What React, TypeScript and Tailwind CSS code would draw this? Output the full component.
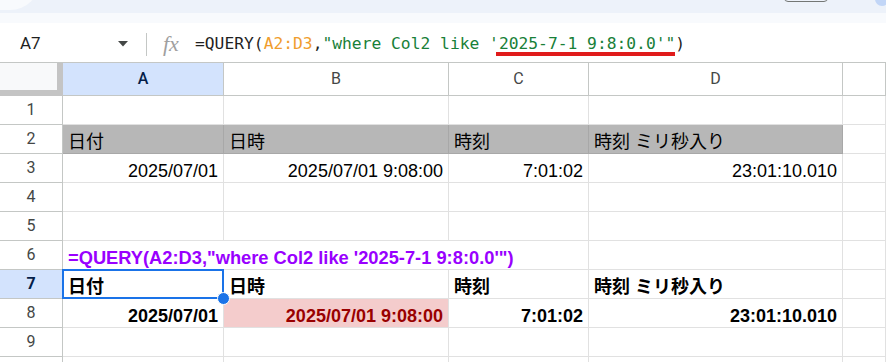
import React from "react";

const W = ["w-[63px]", "w-[161px]", "w-[225px]", "w-[140px]", "w-[254px]", "flex-1"];
const cellFont = { fontFamily: '"Liberation Sans", Arial, "Noto Sans CJK JP", sans-serif' };

type C = { t?: string; right?: boolean; bold?: boolean; cls?: string; color?: string };

function RowNum({ n, active }: { n?: number; active?: boolean }) {
  return (
    <div
      className={`${W[0]} shrink-0 h-full border-r border-b border-[#c4c7c5] flex items-center justify-center text-[16px] ${
        active ? "bg-[#d3e3fd] text-[#041e49] font-bold" : "bg-white text-[#444746]"
      }`}
      style={{ fontFamily: "Roboto, Arial, sans-serif" }}
    >
      {n}
    </div>
  );
}

function Cell({ w, c, border = "border-[#e1e1e1]", bg = "" }: { w: string; c?: C; border?: string; bg?: string }) {
  return (
    <div
      className={`${w} shrink-0 h-full border-r border-b ${border} ${bg} ${c?.cls ?? ""} flex items-end pb-[1px] px-[5px] overflow-visible whitespace-nowrap ${
        c?.right ? "justify-end" : "justify-start"
      } ${c?.bold ? "font-bold" : ""} text-[18px] leading-[20px]`}
      style={{ ...cellFont, color: c?.color ?? "#000" }}
    >
      {c?.t}
    </div>
  );
}

function Row({ n, cells, active, border, bg }: { n?: number; cells: (C | undefined)[]; active?: boolean; border?: string; bg?: string[] }) {
  return (
    <div className="flex h-[29px]">
      <RowNum n={n} active={active} />
      {[1, 2, 3, 4, 5].map((i) => (
        <Cell key={i} w={W[i]} c={cells[i - 1]} border={i <= 4 ? border : undefined} bg={i <= 4 ? bg?.[i - 1] : ""} />
      ))}
    </div>
  );
}

export default function App() {
  const gray = ["bg-[#b7b7b7]", "bg-[#b7b7b7]", "bg-[#b7b7b7]", "bg-[#b7b7b7]"];
  return (
    <div className="w-[886px] h-[362px] overflow-hidden bg-white relative">
      {/* top chrome strip */}
      <div className="h-[13px] bg-[#edf2fa] relative overflow-hidden">
        <div className="absolute left-[-20px] top-[-20px] w-[60px] h-[30px] rounded-br-[30px] bg-[#f8fafd]" />
        <div className="absolute left-[784px] top-[-10px] w-[44px] h-[12px] rounded-[4px] border border-[#747775]" />
        <div className="absolute left-[875px] top-[-8px] w-[14px] h-[14px] rounded-full bg-[#c2d6f7]" />
      </div>
      <div className="h-[10px] bg-[#f8fafd]" />
      {/* formula bar */}
      <div className="h-[40px] flex items-center pt-[3px] border-b border-[#c4c7c5] relative">
        <div className="w-[146px] shrink-0 flex items-center pl-[20px] pr-[18px] justify-between">
          <span className="text-[17px] text-[#1f1f1f]" style={{ fontFamily: "Roboto, Arial, sans-serif" }}>
            A7
          </span>
          <svg width="10" height="6" viewBox="0 0 10 6">
            <polygon points="0,0 10,0 5,5.5" fill="#444746" />
          </svg>
        </div>
        <div className="w-px h-[23px] bg-[#c4c7c5]" />
        <div
          className="w-[48px] shrink-0 pl-[16px] text-[22px] italic text-[#a0a0a0] leading-none"
          style={{ fontFamily: '"Liberation Serif", "Times New Roman", serif' }}
        >
          fx
        </div>
        <div
          className="text-[16.3px] whitespace-nowrap text-[#1f1f1f] pt-[1px]"
          style={{ fontFamily: '"DejaVu Sans Mono", "Liberation Mono", monospace' }}
        >
          =QUERY(<span className="text-[#f09d2e]">A2:D3</span>,
          <span className="text-[#188038]">"where Col2 like '2025-7-1 9:8:0.0'"</span>)
        </div>
        <div className="absolute left-[496px] top-[29px] w-[179px] h-[4px] bg-[#e01b1b]" />
      </div>
      {/* column header */}
      <div className="flex h-[33px]">
        <div className={`${W[0]} shrink-0 h-full relative bg-[#f8f9fa]`}>
          <div className="absolute right-0 top-0 bottom-0 w-[6px] bg-[#c4c4c4]" />
          <div className="absolute left-0 right-0 bottom-0 h-[6px] bg-[#c4c4c4]" />
        </div>
        {["A", "B", "C", "D", ""].map((l, i) => (
          <div
            key={i}
            className={`${W[i + 1]} shrink-0 h-full border-r border-b border-[#c4c7c5] flex items-center justify-center text-[16px] ${
              i === 0 ? "bg-[#d3e3fd] text-[#041e49] font-medium" : "text-[#444746]"
            }`}
            style={{ fontFamily: "Roboto, Arial, sans-serif" }}
          >
            {l}
          </div>
        ))}
      </div>
      {/* rows */}
      <Row n={1} cells={[]} border="border-[#e1e1e1]" />
      <Row
        n={2}
        cells={[{ t: "日付" }, { t: "日時" }, { t: "時刻" }, { t: "時刻 ミリ秒入り" }]}
        border="border-[#a8a8a8]"
        bg={gray}
      />
      <Row
        n={3}
        cells={[
          { t: "2025/07/01", right: true },
          { t: "2025/07/01 9:08:00", right: true },
          { t: "7:01:02", right: true },
          { t: "23:01:10.010", right: true },
        ]}
      />
      <Row n={4} cells={[]} />
      <Row n={5} cells={[]} />
      {/* row 6 with overflow */}
      <div className="flex h-[29px]">
        <RowNum n={6} />
        <div
          className="w-[526px] shrink-0 h-full border-r border-b border-[#e1e1e1] flex items-end pb-[1px] px-[5px] whitespace-nowrap font-bold text-[18.3px] leading-[20px] text-[#9900ff]"
          style={cellFont}
        >
          =QUERY(A2:D3,"where Col2 like '2025-7-1 9:8:0.0'")
        </div>
        <Cell w={W[4]} />
        <Cell w={W[5]} />
      </div>
      {/* row 7 */}
      <div className="flex h-[29px] relative">
        <RowNum n={7} active />
        {[
          { t: "日付", bold: true },
          { t: "日時", bold: true },
          { t: "時刻", bold: true },
          { t: "時刻 ミリ秒入り", bold: true },
          undefined,
        ].map((c, i) => (
          <Cell key={i} w={W[i + 1]} c={c} />
        ))}
        <div className="absolute left-[62px] top-[-1px] w-[162px] h-[30px] border-2 border-[#1a73e8] pointer-events-none" />
        <div className="absolute left-[217px] top-[22px] w-[13px] h-[13px] rounded-full bg-[#1a73e8] border border-white z-10" />
      </div>
      <Row
        n={8}
        cells={[
          { t: "2025/07/01", right: true, bold: true },
          { t: "2025/07/01 9:08:00", right: true, bold: true, color: "#990000" },
          { t: "7:01:02", right: true, bold: true },
          { t: "23:01:10.010", right: true, bold: true },
        ]}
        bg={["", "bg-[#f4cccc]", "", ""]}
      />
      <Row n={9} cells={[]} />
      <Row cells={[]} />
    </div>
  );
}
